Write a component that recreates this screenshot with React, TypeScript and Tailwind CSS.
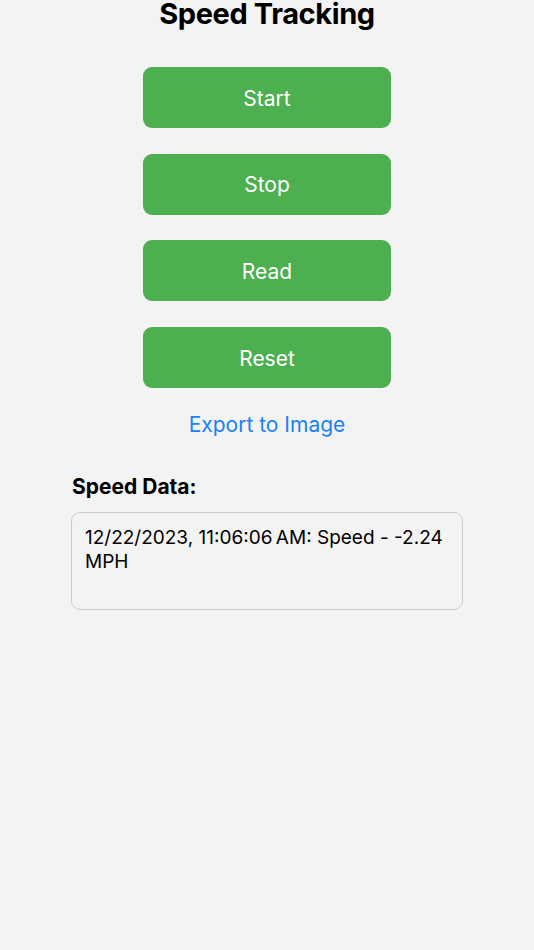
import React from "react";

const font = { fontFamily: 'Inter, "Noto Sans", sans-serif' };

export default function App() {
  const buttons = ["Start", "Stop", "Read", "Reset"];
  return (
    <div className="min-h-[950px] w-full bg-[#f3f3f3] flex flex-col items-center text-black" style={font}>
      <h1 className="text-[29px] leading-[28px] font-bold tracking-[-0.4px]">Speed Tracking</h1>
      <div className="flex flex-col gap-[25.7px] mt-[39px]">
        {buttons.map((b) => (
          <button
            key={b}
            className="w-[248px] h-[61px] rounded-[9px] bg-[#4caf50] text-white text-[21px] pt-[2px] flex items-center justify-center"
          >
            {b}
          </button>
        ))}
      </div>
      <div className="mt-[23px] text-[21px] leading-[28px] text-[#1a82f5]">Export to Image</div>
      <div className="w-[392px] mt-[34px] flex flex-col">
        <div className="text-[21px] leading-[28px] font-bold pl-[1px]">Speed Data:</div>
        <div className="mt-[11px] h-[98px] border-[1.5px] border-[#cccccc] rounded-[9px] px-[13px] pt-[13px] text-[19px] leading-[24px]">
          12/22/2023, 11:06:06&#8239;AM: Speed - -2.24 MPH
        </div>
      </div>
    </div>
  );
}
